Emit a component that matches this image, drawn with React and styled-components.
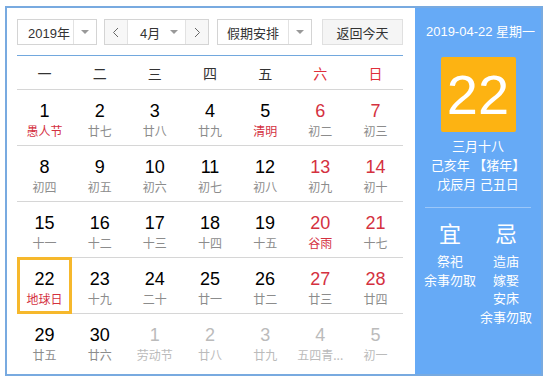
import React from 'react'
import styled, { createGlobalStyle } from 'styled-components'

const GlobalStyle = createGlobalStyle`
  html, body { margin: 0; padding: 0; background: #fff; }
  body { font-family: "Liberation Sans", "Noto Sans CJK SC", sans-serif; }
`;

const Page = styled.div`
  padding: 6px 0 0 5px;
`;

const Frame = styled.div`
  box-sizing: border-box;
  width: 538px;
  height: 370px;
  border: 2px solid #78aae0;
  display: flex;
`;

const Left = styled.div`
  flex: 1;
  padding: 11px 12px 0 10px;
`;

const Toolbar = styled.div`
  display: flex;
  height: 26px;
  font-size: 13px;
  color: #333;
`;

const Select = styled.div`
  box-sizing: border-box;
  display: flex;
  align-items: stretch;
  width: ${p => p.$w}px;
  margin-right: ${p => p.$mr || 0}px;
  border: 1px solid #d4d4d4;
  background: #fff;
`;

const SelText = styled.div`
  flex: 1;
  display: flex;
  align-items: center;
  justify-content: ${p => p.$center ? 'center' : 'flex-start'};
  padding-left: ${p => p.$pl || 0}px;
  font-family: "Liberation Sans", "Noto Sans CJK SC", sans-serif;
`;

const Caret = styled.div`
  width: 22px;
  display: flex;
  align-items: center;
  justify-content: center;
  border-left: ${p => p.$line ? '1px solid #e2e2e2' : 'none'};
  &::after {
    content: "";
    border-left: 4px solid transparent;
    border-right: 4px solid transparent;
    border-top: 4px solid #999;
  }
`;

const Nav = styled.div`
  width: 22px;
  display: flex;
  align-items: center;
  justify-content: center;
  background: #f7f7f7;
  border-${p => p.$side}: 1px solid #e2e2e2;
`;

const Today = styled.div`
  box-sizing: border-box;
  width: 81px;
  display: flex;
  align-items: center;
  justify-content: center;
  background: #f5f5f5;
  border: 1px solid #e0e0e0;
`;

const Table = styled.div`
  margin-top: 10px;
  border-top: 1px solid #72a8de;
`;

const Week = styled.div`
  display: grid;
  grid-template-columns: repeat(7, 1fr);
  height: 33px;
  border-bottom: 1px solid #d6d6d6;
  font-size: 14px;
  font-family: "Noto Sans CJK SC", sans-serif;
`;

const WeekDay = styled.div`
  display: flex;
  align-items: center;
  justify-content: center;
  color: ${p => p.$red ? '#e02f3a' : '#333'};
`;

const Row = styled.div`
  display: grid;
  grid-template-columns: repeat(7, 1fr);
  height: 55px;
  border-bottom: ${p => p.$last ? 'none' : '1px solid #d6d6d6'};
`;

const Cell = styled.div`
  box-sizing: border-box;
  height: ${p => p.$sel ? '57px' : '55px'};
  margin-top: ${p => p.$sel ? '-1px' : '0'};
  padding-top: ${p => p.$sel ? '8px' : '10px'};
  border: ${p => p.$sel ? '3px solid #f6b82c' : 'none'};
  text-align: center;
  position: relative;
  z-index: ${p => p.$sel ? 1 : 0};
  background: #fff;
`;

const Num = styled.div`
  font-family: "Liberation Sans", Arial, sans-serif;
  font-size: 18px;
  line-height: 22px;
  color: ${p => p.$tone === 'grey' ? '#bbb' : p.$tone === 'red' ? '#d4313f' : '#000'};
`;

const Lunar = styled.div`
  font-family: "Noto Sans CJK SC", sans-serif;
  font-size: 12px;
  line-height: 16px;
  margin-top: 1px;
  white-space: nowrap;
  color: ${p => p.$tone === 'grey' ? '#bbb' : p.$tone === 'red' ? '#d4313f' : '#8c8c8c'};
`;

const Panel = styled.div`
  width: 130px;
  background: #66aaf6;
  color: #fff;
  text-align: center;
  padding-top: 15px;
  font-family: "Liberation Sans", "Noto Sans CJK SC", sans-serif;
`;

const DateLine = styled.div`
  font-size: 13px;
  line-height: 18px;
  padding-left: 5px;
`;

const BigDay = styled.div`
  width: 75px;
  height: 75px;
  margin: 16px auto 0;
  background: #fdb312;
  border-radius: 2px;
  display: flex;
  align-items: center;
  justify-content: center;
  font-size: 56px;
  font-family: "Liberation Sans", Arial, sans-serif;
`;

const LunarInfo = styled.div`
  margin-top: 5px;
  font-size: 13px;
  line-height: 19px;
`;

const Divider = styled.div`
  height: 1px;
  margin: 13px 10px 0;
  background: rgba(255, 255, 255, 0.35);
`;

const Advice = styled.div`
  display: flex;
  justify-content: center;
  gap: 4px;
  margin-top: 10px;
`;

const AdviceCol = styled.div`
  width: 52px;
  display: flex;
  flex-direction: column;
  align-items: center;
`;

const AdviceHead = styled.div`
  font-size: 22px;
  line-height: 28px;
  margin-bottom: 6px;
  font-family: "Noto Sans CJK SC", sans-serif;
`;

const AdviceItem = styled.div`
  font-size: 13px;
  line-height: 18.5px;
  white-space: nowrap;
  font-family: "Noto Sans CJK SC", sans-serif;
`;

const Chevron = ({ dir }) => (
  <svg width="8" height="11" viewBox="0 0 8 11">
    <polyline
      points={dir === 'left' ? '6,1 1.5,5.5 6,10' : '2,1 6.5,5.5 2,10'}
      fill="none"
      stroke="#666"
      strokeWidth="1"
    />
  </svg>
);

const weeks = ['一', '二', '三', '四', '五', '六', '日'];

const rows = [
  [[1, '愚人节', 'red'], [2, '廿七'], [3, '廿八'], [4, '廿九'], [5, '清明', 'red'], [6, '初二'], [7, '初三']],
  [[8, '初四'], [9, '初五'], [10, '初六'], [11, '初七'], [12, '初八'], [13, '初九'], [14, '初十']],
  [[15, '十一'], [16, '十二'], [17, '十三'], [18, '十四'], [19, '十五'], [20, '谷雨', 'red'], [21, '十七']],
  [[22, '地球日', 'red', true], [23, '十九'], [24, '二十'], [25, '廿一'], [26, '廿二'], [27, '廿三'], [28, '廿四']],
  [[29, '廿五'], [30, '廿六'], [1, '劳动节', 'grey'], [2, '廿八', 'grey'], [3, '廿九', 'grey'], [4, '五四青...', 'grey'], [5, '初一', 'grey']],
];

function App() {
  return (
    <Page>
      <GlobalStyle />
      <Frame>
        <Left>
          <Toolbar>
            <Select $w={80} $mr={7}>
              <SelText $pl={10}>2019年</SelText>
              <Caret $line />
            </Select>
            <Select $w={105} $mr={8}>
              <Nav $side="right"><Chevron dir="left" /></Nav>
              <SelText $pl={12}>4月</SelText>
              <Caret />
              <Nav $side="left"><Chevron dir="right" /></Nav>
            </Select>
            <Select $w={95} $mr={10}>
              <SelText $center>假期安排</SelText>
              <Caret $line />
            </Select>
            <Today>返回今天</Today>
          </Toolbar>
          <Table>
            <Week>
              {weeks.map((w, i) => (
                <WeekDay key={w} $red={i > 4}>{w}</WeekDay>
              ))}
            </Week>
            {rows.map((row, ri) => (
              <Row key={ri} $last={ri === rows.length - 1}>
                {row.map(([n, l, tone, sel], ci) => {
                  const grey = tone === 'grey';
                  const numTone = grey ? 'grey' : ci > 4 ? 'red' : '';
                  return (
                    <Cell key={ci} $sel={sel}>
                      <Num $tone={numTone}>{n}</Num>
                      <Lunar $tone={tone}>{l}</Lunar>
                    </Cell>
                  );
                })}
              </Row>
            ))}
          </Table>
        </Left>
        <Panel>
          <DateLine>2019-04-22 星期一</DateLine>
          <BigDay>22</BigDay>
          <LunarInfo>
            <div>三月十八</div>
            <div>己亥年 【猪年】</div>
            <div>戊辰月 己丑日</div>
          </LunarInfo>
          <Divider />
          <Advice>
            <AdviceCol>
              <AdviceHead>宜</AdviceHead>
              <AdviceItem>祭祀</AdviceItem>
              <AdviceItem>余事勿取</AdviceItem>
            </AdviceCol>
            <AdviceCol>
              <AdviceHead>忌</AdviceHead>
              <AdviceItem>造庙</AdviceItem>
              <AdviceItem>嫁娶</AdviceItem>
              <AdviceItem>安床</AdviceItem>
              <AdviceItem>余事勿取</AdviceItem>
            </AdviceCol>
          </Advice>
        </Panel>
      </Frame>
    </Page>
  );
}

export default App
